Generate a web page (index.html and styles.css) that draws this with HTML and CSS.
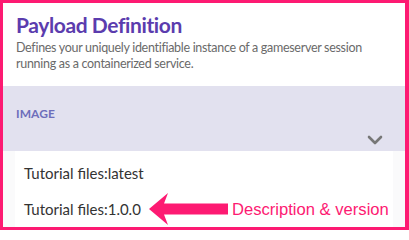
FILE: index.html
```
<!DOCTYPE html>
<html>
<head>
<meta charset="utf-8">
<link rel="stylesheet" href="styles.css">
</head>
<body>
<div class="frame">
  <header class="head">
    <h1 class="title">Payload Definition</h1>
    <p class="desc">Defines your uniquely identifiable instance of a gameserver session running as a containerized service.</p>
  </header>
  <section class="field">
    <div class="label">IMAGE</div>
    <div class="select-row">
      <svg class="chev" width="16" height="10" viewBox="0 0 16 10"><path d="M2 2 L8 8 L14 2" fill="none" stroke="#777" stroke-width="2.6" stroke-linecap="round" stroke-linejoin="round"/></svg>
    </div>
  </section>
  <div class="lower">
    <ul class="menu">
      <li class="item">Tutorial files:latest</li>
      <li class="item">Tutorial files:1.0.0</li>
    </ul>
  </div>
  <div class="note">
    <svg class="arrow" width="79" height="32" viewBox="0 0 79 32"><polygon points="0,16 19,0 15,10.5 79,10.5 79,21.5 15,21.5 19,32" fill="#fd1a72"/></svg>
    <span class="note-text">Description &amp; version</span>
  </div>
</div>
</body>
</html>
```
FILE: styles.css
```
* { box-sizing: border-box; }
html, body { margin: 0; padding: 0; }
body { width: 409px; height: 230px; overflow: hidden; font-family: "Lato", "Noto Sans", sans-serif; }
.frame {
  position: relative;
  width: 409px;
  height: 230px;
  border: 3px solid #fd1a72;
  border-right-width: 4px;
  background: #fafafb;
  display: flex;
  flex-direction: column;
  overflow: hidden;
}
.head { background: #fff; padding: 9px 13px 0 13px; height: 85px; }
.title { margin: 0; font-size: 21px; font-weight: 700; color: #5b3cae; line-height: 26px; letter-spacing: -0.4px; }
.desc { margin: 2px 0 0 0; font-size: 12.5px; line-height: 16px; color: #6a6a6a; letter-spacing: -0.3px; }
.field { background: #e2e1ef; height: 67px; padding: 21px 13px 0 13px; }
.label { font-size: 12px; font-weight: 700; color: #6e6ebb; letter-spacing: 0.1px; line-height: 14px; }
.select-row { display: flex; justify-content: flex-end; padding: 14px 9px 0 0; }
.chev { display: block; }
.lower { flex: 1; padding: 0 12px; }
.menu { list-style: none; margin: 0; padding: 4px 0 0 0; background: #fff; height: 100%; }
.item { font-size: 15px; color: #333; padding: 0 9px; line-height: 36px; }
.note { position: absolute; left: 146px; top: 190px; display: flex; align-items: center; gap: 4px; }
.arrow { display: block; }
.note-text { font-family: "Liberation Sans", Arial, sans-serif; font-size: 16.6px; color: #fd1a72; margin-top: 1px; }
```
